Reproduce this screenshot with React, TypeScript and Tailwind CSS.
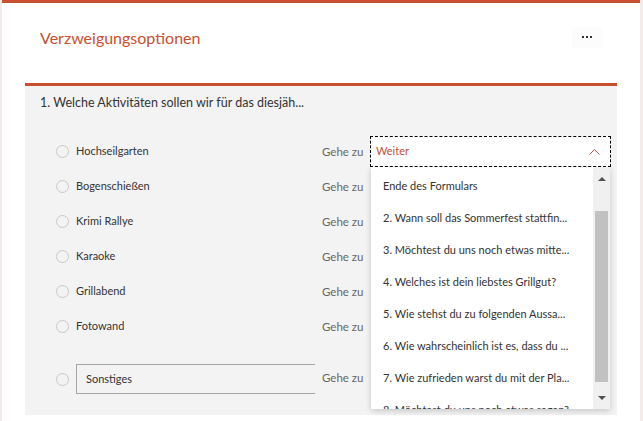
import React from "react";

const options = ["Hochseilgarten", "Bogenschießen", "Krimi Rallye", "Karaoke", "Grillabend", "Fotowand"];

const targets = [
  "Ende des Formulars",
  "2. Wann soll das Sommerfest stattfin...",
  "3. Möchtest du uns noch etwas mitte...",
  "4. Welches ist dein liebstes Grillgut?",
  "5. Wie stehst du zu folgenden Aussa...",
  "6. Wie wahrscheinlich ist es, dass du ...",
  "7. Wie zufrieden warst du mit der Pla...",
  "8. Möchtest du uns noch etwas sagen?",
];

function Radio() {
  return <span className="h-[13px] w-[13px] shrink-0 rounded-full border border-[#c8c8c8] bg-[#f3f3f3]" />;
}

export default function App() {
  return (
    <div
      className="flex h-[421px] w-[643px] overflow-hidden bg-[#f4eceb] pl-[2px] pr-[3px]"
      style={{ fontFamily: 'Lato, "Open Sans", sans-serif' }}
    >
      <div className="flex flex-1 flex-col border-t-[3px] border-[#c9502f] bg-white pt-px">
        {/* header */}
        <div className="flex h-[79px] items-start pl-[38px] pr-[38px]">
          <h2 className="mt-[22px] text-[16px] leading-[24px] text-[#c9502f]">Verzweigungsoptionen</h2>
          <button className="ml-auto mt-[23px] flex h-[21px] w-[30px] items-center justify-center gap-[2px] bg-[#fcfcfc] pb-[1px]">
            <span className="h-[2px] w-[2px] bg-[#333]" />
            <span className="h-[2px] w-[2px] bg-[#333]" />
            <span className="h-[2px] w-[2px] bg-[#333]" />
          </button>
        </div>

        {/* question panel */}
        <div className="mx-[23px] h-[332px] border-t-[3px] border-[#c9502f] bg-[#f3f3f3]">
          <p className="pl-[15px] pt-[7px] text-[12.5px] leading-[20px] text-[#333]">
            1. Welche Aktivitäten sollen wir für das diesjäh...
          </p>

          <div className="mt-[21px] pl-[31px]">
            {options.map((o, i) => (
              <div key={o} className="flex h-[35px] items-center">
                <div className="flex w-[266px] items-center gap-[7px]">
                  <Radio />
                  <span className="text-[11px] text-[#333]">{o}</span>
                </div>
                <span className="w-[48px] text-[11.5px] text-[#666]">Gehe zu</span>
                {i === 0 && (
                  <div className="relative">
                    <div className="flex h-[31px] w-[241px] items-center justify-between border border-dashed border-black bg-white pl-[5px] pr-[10px]">
                      <span className="text-[11px] text-[#c9502f]">Weiter</span>
                      <svg width="11" height="6" viewBox="0 0 11 6" fill="none" stroke="#d0504a" strokeWidth="1">
                        <path d="M0.5 5.5 L5.5 0.5 L10.5 5.5" />
                      </svg>
                    </div>

                    {/* dropdown popup */}
                    <div className="absolute left-px top-[31px] z-10 flex h-[242px] w-[239px] overflow-hidden bg-white shadow-[0_2px_6px_rgba(0,0,0,0.18)]">
                      <ul className="flex-1 pt-[3px]">
                        {targets.map((t) => (
                          <li key={t} className="flex h-[32px] shrink-0 items-center whitespace-nowrap pl-[12px] text-[11px] text-[#333]">
                            {t}
                          </li>
                        ))}
                      </ul>
                      <div className="flex w-[17px] flex-col items-center bg-[#f0f0f0]">
                        <div className="flex h-[22px] w-full items-center justify-center pt-[2px]">
                          <svg width="8" height="4" viewBox="0 0 8 4"><path d="M0 4 L4 0 L8 4 Z" fill="#505050" /></svg>
                        </div>
                        <div className="mt-[22px] h-[171px] w-[13px] bg-[#c1c1c1]" />
                        <div className="flex h-[26px] w-full items-center justify-center pt-[6px]">
                          <svg width="8" height="4" viewBox="0 0 8 4"><path d="M0 0 L8 0 L4 4 Z" fill="#505050" /></svg>
                        </div>
                      </div>
                    </div>
                  </div>
                )}
              </div>
            ))}

            <div className="mt-[20px] flex h-[30px] items-center">
              <div className="flex w-[266px] items-center gap-[7px]">
                <Radio />
                <div className="flex h-[30px] w-[239px] items-center border border-r-0 border-[#a6a6a6] pl-[9px] text-[11px] text-[#333]">
                  Sonstiges
                </div>
              </div>
              <span className="-mt-[2px] w-[48px] text-[11.5px] text-[#666]">Gehe zu</span>
            </div>
          </div>
        </div>
      </div>
    </div>
  );
}
